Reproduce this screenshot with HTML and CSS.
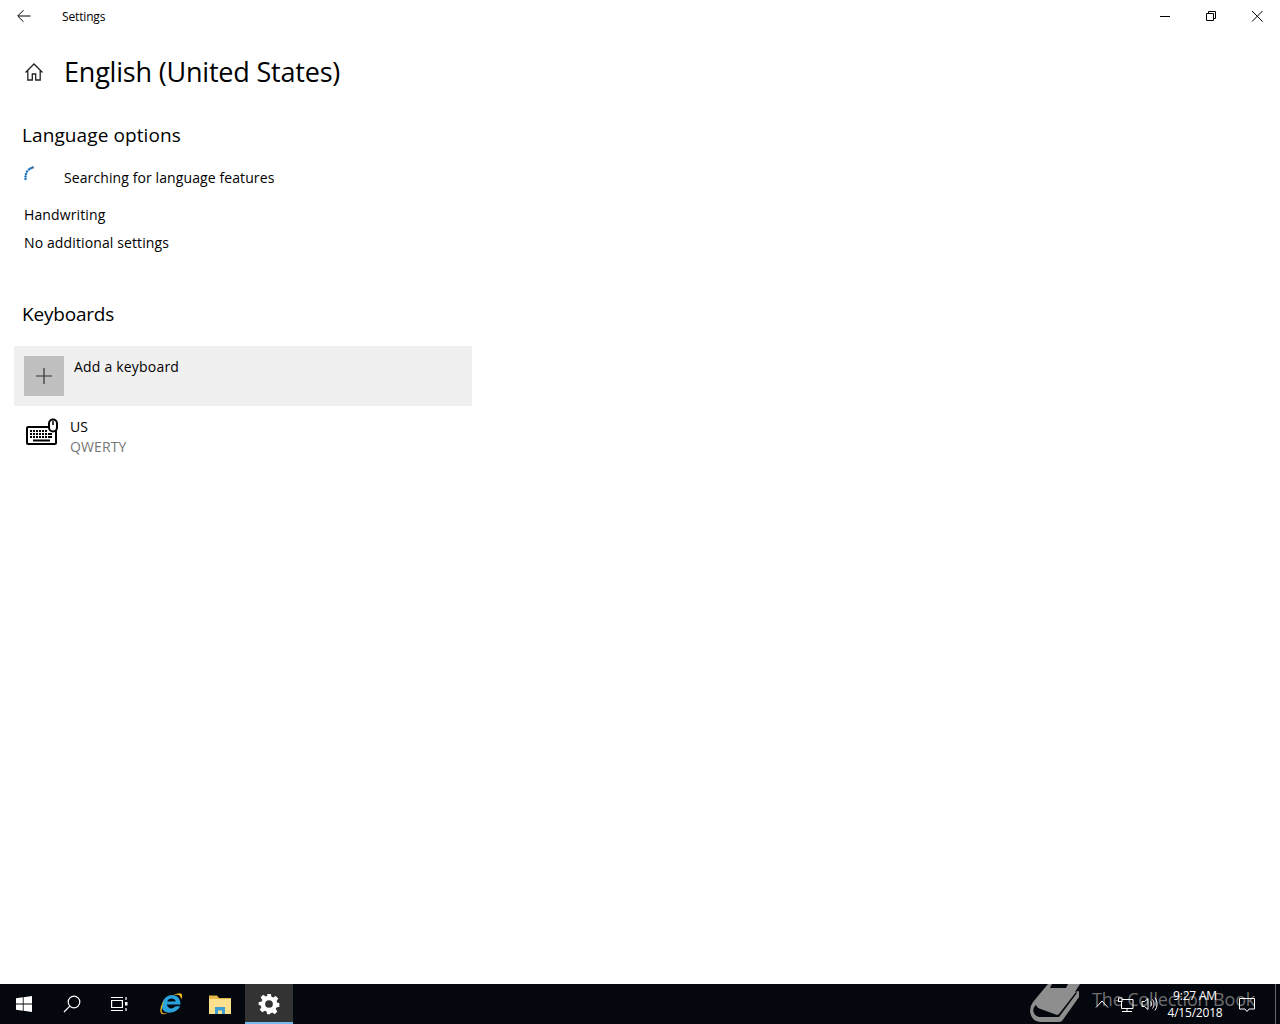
FILE: index.html
```html
<!DOCTYPE html>
<html lang="en">
<head>
<meta charset="utf-8">
<title>Settings</title>
<link rel="stylesheet" href="styles.css">
</head>
<body>
<div class="window">
  <header class="titlebar">
    <button class="back" aria-label="Back">
      <svg width="16" height="16" viewBox="0 0 16 16"><path d="M14.5 8H2M7.5 2.2 1.7 8l5.8 5.800" class="s1"/></svg>
    </button>
    <span class="app-name">Settings</span>
    <div class="caption">
      <button class="cap" aria-label="Minimize"><svg width="12" height="12" viewBox="0 0 12 12"><path d="M1 6.500h10" class="s1"/></svg></button>
      <button class="cap" aria-label="Restore"><svg width="12" height="12" viewBox="0 0 12 12"><path d="M1.500 3.500h7v7h-7zM3.500 3.500v-2h7v7h-2" class="s1"/></svg></button>
      <button class="cap" aria-label="Close"><svg width="12" height="12" viewBox="0 0 12 12"><path d="M1 1l10.500 10.500M11.500 1 1 11.500" class="s1"/></svg></button>
    </div>
  </header>
  <main class="content">
    <div class="page-head">
      <svg class="home" width="20" height="20" viewBox="0 0 20 20"><path d="M1.500 10.500 10 2l8.500 8.500M3.800 8.500v9.500h4.500v-6h3.400v6h4.500V8.500" class="s2"/></svg>
      <h1>English (United States)</h1>
    </div>
    <h2 class="lang-head">Language options</h2>
    <div class="searching">
      <svg class="spinner" width="14" height="16" viewBox="0 0 14 16" fill="#1f74c0">
        <circle cx="10.700" cy="1.500" r="1.200" fill="#3d6a94"/><circle cx="8.800" cy="2.200" r="1.200"/>
        <circle cx="7" cy="3.400" r="1.200"/><circle cx="5" cy="5.500" r="1.200"/><circle cx="4" cy="8" r="1.200"/>
        <circle cx="3.500" cy="10.500" r="1.200"/><circle cx="3.500" cy="13" r="1.200"/>
      </svg>
      <span>Searching for language features</span>
    </div>
    <p class="line hand">Handwriting</p>
    <p class="line none">No additional settings</p>
    <h2 class="kb-head">Keyboards</h2>
    <div class="add-row">
      <div class="plus"><svg width="16" height="16" viewBox="0 0 16 16"><path d="M8 0v16M0 8h16" stroke="#333" stroke-width="1.200" fill="none"/></svg></div>
      <span>Add a keyboard</span>
    </div>
    <div class="kb-row">
      <svg class="kb-icon" width="34" height="28" viewBox="0 0 34 28">
        <rect x="2" y="9" width="29" height="17" rx="1" fill="none" stroke="#000" stroke-width="2"/>
        <path d="M5 13h2M8 13h2M11 13h2M14 13h2M17 13h2M20 13h2M5 16h2M8 16h2M11 16h2M14 16h2M17 16h2M20 16h2M23 16h4M5 19h2M8 19h2M11 19h2M14 19h2M17 19h2M20 19h2M23 19h4M8 22.500h17" stroke="#000" stroke-width="2" fill="none"/>
        <rect x="24" y="1.500" width="8" height="12" rx="4" fill="#fff" stroke="#000" stroke-width="2"/>
        <path d="M28 3v4" stroke="#000" stroke-width="1.500"/>
      </svg>
      <div class="kb-text"><span class="kb-name">US</span><span class="kb-sub">QWERTY</span></div>
    </div>
  </main>
  <footer class="taskbar">
    <div class="tb-btn">
      <svg width="16" height="16" viewBox="0 0 16 16" fill="#fff"><path d="M0 2.200 6.800 1.300v6.300H0zM7.600 1.200 16 0v7.600H7.600zM0 8.400h6.800v6.300L0 13.800zM7.600 8.400H16V16l-8.400-1.200z"/></svg>
    </div>
    <div class="tb-btn">
      <svg width="18" height="18" viewBox="0 0 18 18" fill="none" stroke="#fff" stroke-width="1.200"><circle cx="11" cy="7" r="5.800"/><path d="M6.800 11.200 1 17"/></svg>
    </div>
    <div class="tb-btn">
      <svg width="18" height="16" viewBox="0 0 18 16" fill="none" stroke="#fff" stroke-width="1.200"><path d="M0.600 4.500h10.800v7H0.600zM0 1.500h12M0 14.500h12M15 1v3M15 12v3"/><rect x="14" y="6" width="2.500" height="3.500" fill="#fff" stroke="none"/></svg>
    </div>
    <div class="tb-btn app ie">
      <svg width="24" height="24" viewBox="0 0 24 24">
        <path d="M3 14.500C3 7 8 3 13 3c5.500 0 8.500 4 8.500 9.500H8c.2 4 5.500 5.500 8.500 1.800h4.700C17.500 22.500 3 23 3 14.500zM8.300 9.500h8.400C16 5.800 9.500 5.500 8.300 9.500z" fill="#2aa3dd"/>
        <path d="M5.500 8C2 12.500.5 18 1.800 20.800c1.700 3 6 .8 7-.3C5.500 22 2.700 21.800 2.700 18.500 2.700 15.500 4 11 5.500 8zM13 3.800C17 1.400 21 .4 22.500 1.800c1 1 .7 3.200-.3 5.700-.4-2.200-1-3.500-2.500-4.500-1.500-.6-4-.3-6.700.8z" fill="#f2b824"/>
      </svg>
    </div>
    <div class="tb-btn app">
      <svg width="22" height="20" viewBox="0 0 22 20">
        <path d="M0 1.500h8l2 2.500h12v15H0z" fill="#e8b748"/>
        <rect x="0" y="5" width="22" height="15" fill="#fbe08e"/>
        <path d="M6 20v-7h10v7h-3v-3.500H9V20z" fill="#3d9fd6"/>
      </svg>
    </div>
    <div class="tb-btn active">
      <svg width="22" height="22" viewBox="0 0 24 24"><path fill="#fff" fill-rule="evenodd" d="M10 1h4l.7 3.200 1.800.8 2.800-1.800 2.800 2.800-1.800 2.800.8 1.800L23.300 11v4l-3.200.7-.8 1.800 1.800 2.800-2.800 2.800-2.800-1.800-1.800.8L13 23.300h-3l-.7-3.200-1.800-.8-2.800 1.800L1.900 18.300l1.800-2.800-.8-1.800L.7 13v-3l3.200-.7.8-1.800L2.900 4.700 5.700 1.900l2.800 1.800 1.800-.8zM12 7.800a4.200 4.200 0 1 0 0 8.400 4.200 4.200 0 0 0 0-8.400z"/></svg>
    </div>
    <div class="tray">
      <svg class="t-chev" width="14" height="8" viewBox="0 0 14 8"><path d="M1 7.500 7 1l6 6.500" fill="none" stroke="#fff"/></svg>
      <svg class="t-net" width="16" height="16" viewBox="0 0 16 16" fill="none" stroke="#fff"><path d="M3.500 2.500H15v9H3.500zM9 11.500v3M4 14.500h10"/><rect x="0.500" y="1" width="3.500" height="3.500" fill="#05070e"/></svg>
      <svg class="t-vol" width="18" height="16" viewBox="0 0 18 16" fill="none" stroke="#fff"><path d="M1 5.500h2.500L7 2.500v11l-3.500-3H1zM9.500 5.500c1 1.500 1 3.500 0 5M11.500 3.500c2 2.500 2 6.500 0 9M13.800 1.500c3 3.500 3 9.500 0 13"/></svg>
      <div class="clock"><span>9:27 AM</span><span>4/15/2018</span></div>
      <svg class="t-note" width="16" height="16" viewBox="0 0 16 16" fill="none" stroke="#fff"><path d="M.5 1.500h15v10.500H10L8 14.500 6 12H.5z"/></svg>
      <div class="show-desktop"></div>
    </div>
    <div class="watermark" aria-hidden="true">
      <svg width="52" height="38" viewBox="0 0 52 38">
        <path fill="#8e8e8e" d="M18 0H50L45 8 49 7V13L32 37Q31 38 28 38H10Q1 37 0 27 0 22 3 18Z"/>
        <path fill="#05070e" d="M6 21C2 24 2 31 9 33H29L47 9 46 8 29 30 27 31 8 24ZM22 0H38L36 4H20Z"/>
      </svg>
      <span>The Collection Book</span>
    </div>
  </footer>
</div>
</body>
</html>
```
FILE: styles.css
```css
* { box-sizing: border-box; }
html, body { margin: 0; height: 100%; }
body { font-family: "Open Sans", "Noto Sans", "Liberation Sans", sans-serif; color: #000; background: #fff; overflow: hidden; }
.s1 { fill: none; stroke: #000; stroke-width: 1; }
.s2 { fill: none; stroke: #222; stroke-width: 1.300; }
.window { display: flex; flex-direction: column; height: 1024px; }

.titlebar { height: 32px; display: flex; align-items: center; flex: none; }
button { border: 0; background: none; padding: 0; display: flex; align-items: center; justify-content: center; }
.back { width: 48px; height: 32px; }
.app-name { font-size: 12px; margin-left: 14px; letter-spacing: -0.15px; }
.caption { margin-left: auto; display: flex; }
.cap { width: 46px; height: 32px; }

.content { flex: 1; padding: 0 0 0 14px; }
.page-head { display: flex; align-items: center; height: 40px; margin-top: 20px; padding-left: 10px; }
.home { flex: none; }
h1 { margin: 0 0 0 20px; font-size: 27px; font-weight: 400; letter-spacing: -0.2px; line-height: 40px; white-space: nowrap; }
h2 { margin: 0; font-size: 19px; font-weight: 400; letter-spacing: -0.2px; line-height: 26px; padding-left: 8px; }
.lang-head { margin-top: 30px; letter-spacing: 0.1px; }
.searching { display: flex; align-items: center; height: 28px; margin-top: 15px; padding-left: 8px; font-size: 14px; letter-spacing: 0.1px; }
.spinner { margin-top: -6px; flex: none; }
.searching span { margin-left: 28px; }
.line { margin: 0; padding-left: 10px; font-size: 14px; letter-spacing: 0.12px; line-height: 28px; }
.hand { margin-top: 10px; }
.kb-head { margin-top: 44px; }
.add-row { width: 458px; height: 60px; margin-top: 19px; padding: 10px; background: #f0f0f0; display: flex; font-size: 14px; letter-spacing: 0.2px; }
.plus { width: 40px; height: 40px; background: #bfbfbf; display: flex; align-items: center; justify-content: center; flex: none; }
.add-row span { margin-left: 10px; line-height: 20px; margin-top: 1px; }
.kb-row { display: flex; margin-top: 10px; padding-left: 10px; height: 44px; }
.kb-icon { flex: none; margin-top: 2px; margin-left: 1px; }
.kb-text { display: flex; flex-direction: column; margin-left: 11px; padding-top: 1px; font-size: 14px; line-height: 20px; letter-spacing: 0.1px; }
.kb-sub { color: #767676; }

.taskbar { position: relative; height: 40px; flex: none; background: #05070e; display: flex; }
.tb-btn { width: 48px; height: 40px; display: flex; align-items: center; justify-content: center; flex: none; }
.tb-btn.app { width: 50.5px; }
.tb-btn.ie { padding-left: 3px; }
.tb-btn.active { background: #333; border-bottom: 2px solid #76b9ed; padding-top: 2px; }
.tray { margin-left: auto; display: flex; align-items: center; color: #fff; height: 40px; position: relative; z-index: 1; }
.t-chev { margin-right: 9px; }
.t-net { margin-right: 7px; margin-top: 2px; }
.t-vol { margin-right: 4px; }
.clock { width: 64px; display: flex; flex-direction: column; align-items: center; font-size: 12px; line-height: 17px; letter-spacing: -0.2px; margin-right: 12px; }
.t-note { margin-right: 20px; margin-top: 2px; }
.show-desktop { width: 1px; height: 40px; background: #666; margin-right: 4px; }
.watermark { position: absolute; left: 1030px; top: -4px; display: flex; align-items: center; gap: 10px; height: 46px; color: #6e6e6e; font-size: 18px; letter-spacing: -0.15px; overflow: hidden; }
.watermark span { white-space: nowrap; margin-top: -8px; }
```
